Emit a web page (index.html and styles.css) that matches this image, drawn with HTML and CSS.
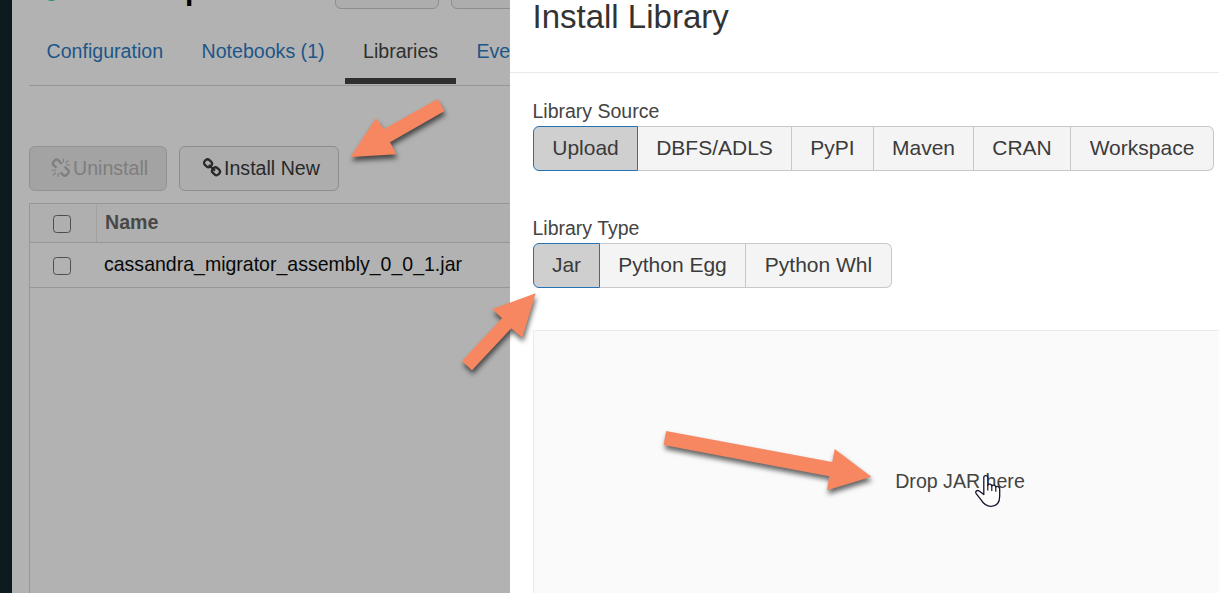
FILE: index.html
```
<!DOCTYPE html>
<html lang="en">
<head>
<meta charset="utf-8">
<title>Install Library</title>
<link rel="stylesheet" href="styles.css">
</head>
<body>
<div class="app">
  <div class="sidebar"></div>
  <main class="cluster">
    <header class="cluster-head">
      <span class="status"></span>
      <span class="cluster-name">p</span>
      <span class="head-btn"></span>
      <span class="head-btn"></span>
    </header>
    <nav class="tabs">
      <a class="tab tab-config">Configuration</a>
      <a class="tab tab-notebooks">Notebooks (1)</a>
      <a class="tab tab-active">Libraries</a>
      <a class="tab tab-events">Eve</a>
    </nav>
    <div class="actions">
      <button class="btn btn-uninstall">
        <svg class="icon" width="20" height="20" viewBox="0 0 20 20" fill="none" stroke="currentColor" stroke-width="2.2">
          <path d="M5.5 9.6 2.6 7.2a2.6 2.6 0 0 1-.2-3.4l1.4-1.5a2.6 2.6 0 0 1 3.6 0l3.4 3.6"/>
          <path d="m9.4 14.4 2.6 2.5a2.6 2.6 0 0 0 3.6 0l1.4-1.4a2.6 2.6 0 0 0 0-3.6l-3.4-3"/>
          <path stroke-width="1.1" d="M.8 12.2h4M2 17.4l3-3M7.2 15v3.8M12.4.8v3.6M17.4 2.4l-2.8 2.8M15 7h4"/>
        </svg>
        <span>Uninstall</span>
      </button>
      <button class="btn btn-install">
        <svg class="icon" width="20" height="20" viewBox="0 0 20 20" fill="none" stroke="currentColor" stroke-width="2.3">
          <rect x="2.1" y="2" width="7.8" height="6.6" rx="2.8" transform="rotate(43 6 5.3)"/>
          <rect x="10.1" y="10" width="7.8" height="6.6" rx="2.8" transform="rotate(43 14 13.3)"/>
          <path d="m6.8 7 6.2 5.6"/>
        </svg>
        <span>Install New</span>
      </button>
    </div>
    <div class="table">
      <div class="row row-head"><span class="check-cell"><i class="check"></i></span><span class="name-head">Name</span></div>
      <div class="row row-item"><span class="check-cell"><i class="check"></i></span><span class="name">cassandra_migrator_assembly_0_0_1.jar</span></div>
    </div>
  </main>
  <section class="panel">
    <h1 class="panel-title">Install Library</h1>
    <div class="panel-body">
      <div class="label">Library Source</div>
      <div class="group">
        <button class="opt opt-on w-upload">Upload</button>
        <button class="opt w-dbfs">DBFS/ADLS</button>
        <button class="opt w-pypi">PyPI</button>
        <button class="opt w-maven">Maven</button>
        <button class="opt w-cran">CRAN</button>
        <button class="opt w-workspace">Workspace</button>
      </div>
      <div class="label label-type">Library Type</div>
      <div class="group">
        <button class="opt opt-on w-jar">Jar</button>
        <button class="opt w-egg">Python Egg</button>
        <button class="opt w-whl">Python Whl</button>
      </div>
      <div class="dropzone">Drop JAR here</div>
    </div>
  </section>
  <svg class="annotations" width="1219" height="593" viewBox="0 0 1219 593">
    <g class="arrows">
      <path d="M350.5 157 376 118.3 384 129 437.7 99 444.5 111 390 142.3 396.5 154.3Z"/>
      <path d="M535.7 293.3 492.3 309 502 318.3 462 361 472 370.3 511.3 328.3 522.3 337.7Z"/>
      <path d="M871.3 476.7 834.7 449 832.3 462 666 431 663.7 445 829.3 476.3 827 490.3Z"/>
    </g>
    <path class="pointer" d="M983.8 494.5V477.5C983.8 474.9 987.8 474.9 987.8 477.5V485.3C988.2 483.5 991.6 483.8 991.8 486C992.5 484.5 995.6 484.9 995.8 487.2C996.8 485.8 999.7 486.4 999.7 489V496C999.7 502.5 996.5 506.3 991 506.3C986 506.3 983.5 504 981.3 500.2L976 493.4C974.8 491.2 977.4 489.7 979.2 491Z"/>
    <path class="pointer-lines" d="M987.8 485v5.5M991.8 486v5M995.8 487.2v4.5"/>
  </svg>
</div>
</body>
</html>
```

FILE: styles.css
```
* { box-sizing: border-box; }
body { margin: 0; font-family: "Liberation Sans", Arial, sans-serif; font-size: 19.6px; color: #3a3a3a; }
button { font: inherit; color: inherit; margin: 0; padding: 0; }
.app { position: relative; display: flex; width: 1219px; height: 593px; overflow: hidden; }
.sidebar { flex: 0 0 12px; background: #0d1a20; }
.cluster { flex: 0 0 498px; overflow: hidden; background: #b2b2b2; padding-left: 17px; }

.cluster-head { display: flex; height: 17px; width: 700px; align-items: flex-start; }
.status { flex: none; width: 15px; height: 15px; margin: -14px 0 0 15px; border-radius: 50%; background: #24946b; }
.cluster-name { flex: 0 0 150px; margin: -27px 0 0 126px; font-size: 30px; line-height: 34px; font-weight: bold; color: #000; }
.head-btn { flex: 0 0 104px; height: 38px; margin: -29px 12px 0 0; border: 1px solid #8d8d8d; border-radius: 6px; background: #adadad; }

.tabs { display: flex; height: 69px; width: 700px; border-bottom: 1px solid #969696; }
.tab { height: 67px; line-height: 68px; color: #1d5688; white-space: nowrap; }
.tab-config { width: 155px; padding-left: 17.5px; }
.tab-notebooks { width: 161px; padding-left: 17.5px; }
.tab-active { width: 111px; padding-left: 18px; color: #2f2f2e; border-bottom: 6px solid #2f2f2e; }
.tab-events { padding-left: 20.5px; }

.actions { display: flex; gap: 12px; padding-top: 60px; }
.btn { display: flex; align-items: center; height: 45px; border: 1px solid #8d8d8d; border-radius: 6px; background: #adadad; color: #292929; padding-bottom: 1px; white-space: nowrap; }
.btn-uninstall { width: 138px; padding-left: 21px; background: #a3a3a3; color: #7e7e7e; border-color: #929292; }
.btn-install { width: 160px; padding-left: 22px; }
.icon { flex: none; margin-right: 2px; }

.table { width: 700px; height: 420px; margin-top: 12px; border: 1px solid #969696; }
.row { display: flex; align-items: center; border-bottom: 1px solid #969696; }
.row-head { height: 39px; background: #afafaf; }
.row-item { height: 45px; }
.check-cell { display: flex; flex: 0 0 67px; height: 37px; align-items: center; padding-left: 23px; border-right: 1px solid #a0a0a0; }
.row-item .check-cell { border-color: transparent; }
.check { width: 18px; height: 18px; border: 1.5px solid #4e4e4e; border-radius: 3.5px; margin-top: 2px; }
.name-head { padding: 0 0 1px 8px; font-weight: bold; color: #484848; }
.name { padding: 0 0 1px 7px; font-size: 19.52px; color: #080808; }

.panel { flex: 0 0 709px; overflow: hidden; background: #fff; }
.panel-title { margin: 0; height: 73px; padding: 0 0 0 22.5px; border-bottom: 1px solid #eaeaea; font-size: 33px; line-height: 33px; font-weight: normal; color: #333; }
.panel-body { padding: 27px 0 0 23px; }
.label { height: 26px; line-height: 23px; margin-left: -0.5px; font-size: 19.5px; color: #444; }
.label-type { margin-top: 46px; }
.group { display: flex; height: 45px; }
.opt { flex: none; border: 1px solid #c8c8c8; border-left: 0; background: #f4f4f4; color: #3b3b3b; font-size: 21px; padding-bottom: 2px; white-space: nowrap; }
.opt-on { border: 1px solid #2272b4; border-radius: 6px 0 0 6px; background: #cfcfcf; }
.opt:last-child { border-radius: 0 6px 6px 0; }
.w-upload { width: 105px; }
.w-dbfs { width: 154px; }
.w-pypi { width: 82px; }
.w-maven { width: 100px; }
.w-cran { width: 97px; }
.w-workspace { width: 143px; }
.w-jar { width: 67px; }
.w-egg { width: 146px; }
.w-whl { width: 146px; }
.dropzone { display: flex; justify-content: center; width: 854px; height: 300px; margin-top: 42px; padding-top: 139px; border: 1px solid #ebebeb; background: #fafafa; color: #444; }

/* Callouts drawn over both the page and the panel */
.annotations { position: absolute; left: 0; top: 0; pointer-events: none; }
.arrows { fill: #f68761; filter: drop-shadow(1px 4px 2.5px rgba(0, 0, 0, 0.6)); }
.pointer { fill: #fff; stroke: #14142a; stroke-width: 1.3; stroke-linejoin: round; }
.pointer-lines { fill: none; stroke: #14142a; stroke-width: 1.2; }
```
